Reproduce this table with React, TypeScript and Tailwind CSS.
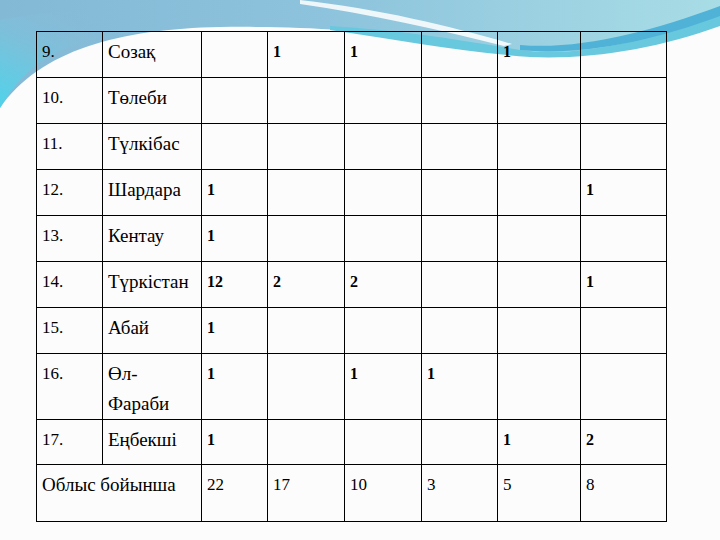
import React from "react";

type Row = { n: string; name: React.ReactNode; v: string[]; h: string };

const rows: Row[] = [
  { n: "9.", name: "Созақ", v: ["", "1", "1", "", "1", ""], h: "h-[46px]" },
  { n: "10.", name: "Төлеби", v: ["", "", "", "", "", ""], h: "h-[46px]" },
  { n: "11.", name: "Түлкібас", v: ["", "", "", "", "", ""], h: "h-[46px]" },
  { n: "12.", name: "Шардара", v: ["1", "", "", "", "", "1"], h: "h-[46px]" },
  { n: "13.", name: "Кентау", v: ["1", "", "", "", "", ""], h: "h-[46px]" },
  { n: "14.", name: "Түркістан", v: ["12", "2", "2", "", "", "1"], h: "h-[46px]" },
  { n: "15.", name: "Абай", v: ["1", "", "", "", "", ""], h: "h-[46px]" },
  {
    n: "16.",
    name: (
      <>
        Өл-
        <br />
        Фараби
      </>
    ),
    v: ["1", "", "1", "1", "", ""],
    h: "h-[66px]",
  },
  { n: "17.", name: "Еңбекші", v: ["1", "", "", "", "1", "2"], h: "h-[45px]" },
];

const totals = ["22", "17", "10", "3", "5", "8"];

function Background() {
  return (
    <svg
      className="absolute left-0 top-0"
      width="720"
      height="540"
      viewBox="0 0 720 540"
    >
      <defs>
        <linearGradient id="topg" x1="0" y1="0" x2="1" y2="0">
          <stop offset="0" stopColor="#84b9d6" />
          <stop offset="0.45" stopColor="#8dc3dc" />
          <stop offset="1" stopColor="#a8dde6" />
        </linearGradient>
        <linearGradient id="leftg" x1="0" y1="1" x2="0.6" y2="0">
          <stop offset="0" stopColor="#4fd3ea" />
          <stop offset="0.5" stopColor="#78c2dc" />
          <stop offset="1" stopColor="#8bbbd7" stopOpacity="0" />
        </linearGradient>
      </defs>
      <rect width="720" height="540" fill="#fcfcfc" />
      <path
        d="M0,0 H720 V12 C680,28 640,44 590,50 C540,56 480,48 420,38 C360,30 300,26 220,27 C120,29 40,50 0,108 Z"
        fill="url(#topg)"
      />
      <path
        d="M0,20 C30,15 60,10 110,8 L130,33 C60,40 25,65 0,108 Z"
        fill="url(#leftg)"
      />
      <path
        d="M330,26 C400,30 460,40 520,50 C580,58 650,40 720,14 V26 C660,48 590,60 530,57 C460,52 400,40 330,30 Z"
        fill="#68c8de"
      />
      <path
        d="M520,45 C580,50 650,32 720,6 V16 C650,42 580,56 520,50 Z"
        fill="#4fb2d6"
      />
      <path
        d="M300,0 C380,9 450,26 512,44 L504,46 C440,30 370,14 300,4 Z"
        fill="#ffffff"
        opacity="0.85"
      />
    </svg>
  );
}

const cell = "border border-black align-top pl-[5px] pt-[5px] leading-[30px]";

export default function App() {
  return (
    <div className="relative w-[720px] h-[540px] overflow-hidden bg-[#fcfcfc] text-black font-['Liberation_Serif','DejaVu_Serif',serif]">
      <Background />
      <div className="relative pt-[31px] pl-[36px]">
        <table className="border-collapse table-fixed w-[630px] text-[19px] font-['Liberation_Serif','DejaVu_Serif',serif]">
          <colgroup>
            <col className="w-[66px]" />
            <col className="w-[99px]" />
            <col className="w-[66px]" />
            <col className="w-[77px]" />
            <col className="w-[77px]" />
            <col className="w-[76px]" />
            <col className="w-[83px]" />
            <col className="w-[86px]" />
          </colgroup>
          <tbody>
            {rows.map((r) => (
              <tr key={r.n} className={r.h}>
                <td className={`${cell} text-[17px]`}>{r.n}</td>
                <td className={cell}>{r.name}</td>
                {r.v.map((x, i) => (
                  <td key={i} className={`${cell} text-[16px] font-bold`}>
                    {x}
                  </td>
                ))}
              </tr>
            ))}
            <tr className="h-[57px]">
              <td className={cell} colSpan={2}>
                Облыс бойынша
              </td>
              {totals.map((x, i) => (
                <td key={i} className={`${cell} text-[17px]`}>
                  {x}
                </td>
              ))}
            </tr>
          </tbody>
        </table>
      </div>
    </div>
  );
}
